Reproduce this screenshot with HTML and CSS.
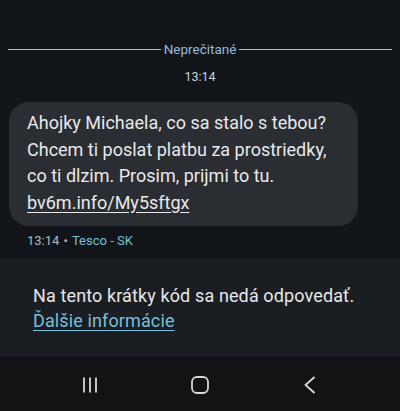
FILE: index.html
```html
<!DOCTYPE html>
<html lang="sk">
<head>
    <meta charset="UTF-8">
    <meta name="viewport" content="width=device-width, initial-scale=1.0">
    <title>Správy</title>
    <link rel="stylesheet" href="styles.css">
</head>
<body>
    <main class="thread">
        <div class="unread">
            <span class="unread-line"></span>
            <span class="unread-label">Neprečitané</span>
            <span class="unread-line"></span>
        </div>
        <div class="stamp">13:14</div>

        <div class="message">
            <div class="bubble">
                Ahojky Michaela, co sa stalo s tebou?<br>
                Chcem ti poslat platbu za prostriedky,<br>
                co ti dlzim. Prosim, prijmi to tu.<br>
                <a class="msg-link" href="#">bv6m.info/My5sftgx</a>
            </div>
            <div class="meta">13:14 <span class="dot">•</span> <span class="sender">Tesco - SK</span></div>
        </div>
    </main>

    <section class="notice">
        <p>Na tento krátky kód sa nedá odpovedať.</p>
        <a class="notice-link" href="#">Ďalšie informácie</a>
    </section>

    <nav class="navbar">
        <svg class="nav-icon" width="18" height="18" viewBox="0 0 18 18">
            <path d="M3 1.5v15M9 1.5v15M15 1.5v15" stroke="#d6d8da" stroke-width="1.8" fill="none"/>
        </svg>
        <svg class="nav-icon" width="18" height="18" viewBox="0 0 18 18">
            <rect x="1" y="1" width="16" height="16" rx="5" stroke="#d6d8da" stroke-width="1.8" fill="none"/>
        </svg>
        <svg class="nav-icon" width="18" height="18" viewBox="0 0 18 18">
            <path d="M13.5 1L4.5 9l9 8" stroke="#d6d8da" stroke-width="1.8" fill="none"/>
        </svg>
    </nav>
</body>
</html>
```

FILE: styles.css
```css
body {
    margin: 0;
    padding: 0;
    width: 400px;
    height: 411px;
    overflow: hidden;
    background-color: #11151a;
    font-family: Roboto, "Noto Sans", sans-serif;
    color: #e6e7e8;
    display: flex;
    flex-direction: column;
}
.thread {
    height: 258px;
    padding-top: 41px;
    box-sizing: border-box;
}
.unread {
    display: flex;
    align-items: center;
    gap: 3px;
    margin: 0 8px;
    height: 16px;
}
.unread-line {
    flex: 1;
    height: 1px;
    background-color: #aabdcb;
}
.unread-label {
    font-size: 13.5px;
    color: #92bddc;
}
.stamp {
    text-align: center;
    font-size: 12.5px;
    color: #cfd1d3;
    margin-top: 12px;
    line-height: 16px;
}
.message {
    margin: 17px 0 0 9px;
}
.bubble {
    width: 349px;
    box-sizing: border-box;
    padding: 8px 10px 10px 18px;
    background-color: #2a2d31;
    border-radius: 20px;
    font-size: 18px;
    line-height: 26.5px;
    color: #e8e9ea;
}
.msg-link {
    color: #e8e9ea;
    text-decoration: underline;
    text-underline-offset: 3px;
}
.meta {
    margin: 6px 0 0 18px;
    font-size: 13px;
    line-height: 17px;
    color: #b4b7ba;
}
.dot {
    margin: 0 1px;
}
.sender {
    color: #72c2d2;
}
.notice {
    height: 99px;
    box-sizing: border-box;
    padding: 25px 20px 0 33px;
    background-color: #1a1e22;
    font-size: 18px;
    line-height: 25px;
    letter-spacing: 0.12px;
}
.notice p {
    margin: 0;
    color: #e6e7e8;
}
.notice-link {
    color: #79bfdc;
    text-decoration: underline;
    text-underline-offset: 3px;
}
.navbar {
    flex: 1;
    display: flex;
    align-items: center;
    justify-content: space-between;
    padding: 2px 81px 0 81px;
    background-color: #111315;
}
.nav-icon {
    display: block;
}
```
